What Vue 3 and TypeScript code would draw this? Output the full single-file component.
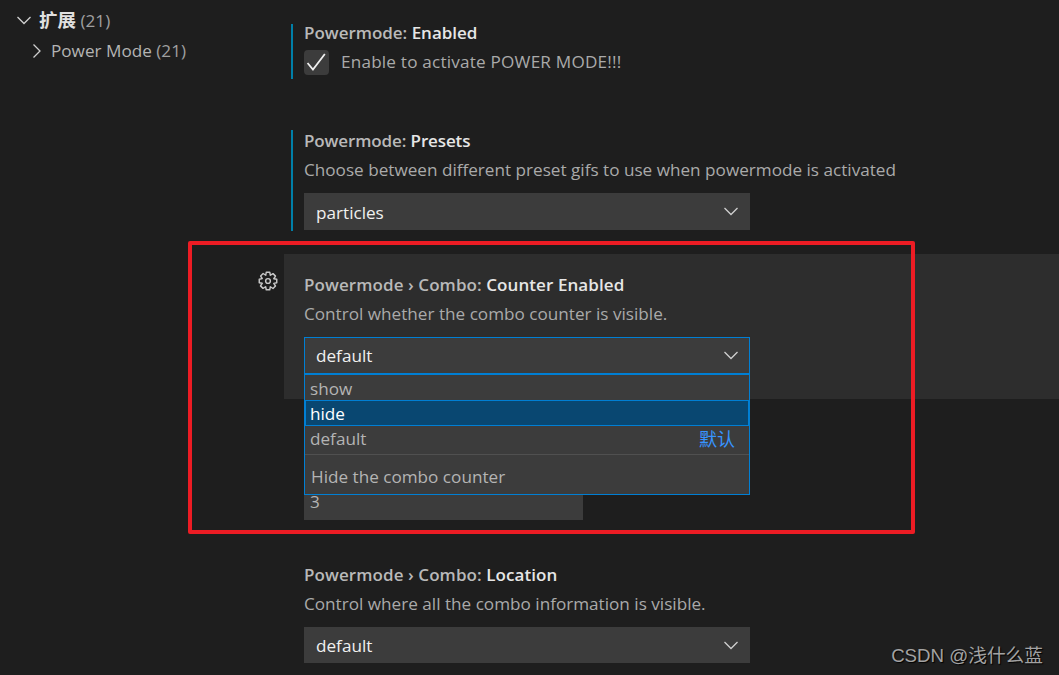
<script setup lang="ts">
const options = ['show', 'hide', 'default']
</script>

<template>
  <div class="page">
    <aside class="tree">
      <div class="tree-row top">
        <svg class="chev" viewBox="0 0 16 16"><path d="M1.5 5 8 11.5 14.5 5" /></svg>
        <span><b>扩展</b> <span class="count">(21)</span></span>
      </div>
      <div class="tree-row sub">
        <svg class="chev" viewBox="0 0 16 16"><path d="M4.5 1.5 11 8l-6.5 6.5" /></svg>
        <span>Power Mode <span class="count">(21)</span></span>
      </div>
    </aside>

    <main class="list">
      <section class="setting first marked">
        <div class="title">Powermode: <b>Enabled</b></div>
        <label class="check-line">
          <span class="checkbox">
            <svg viewBox="0 0 24 24"><path d="M3.4 12.5 8.6 18.8 20 3.8" /></svg>
          </span>
          <span class="desc wide">Enable to activate POWER MODE!!!</span>
        </label>
      </section>

      <section class="setting second marked">
        <div class="title narrow">Powermode: <b>Presets</b></div>
        <div class="desc line">Choose between different preset gifs to use when powermode is activated</div>
        <div class="select">
          <span>particles</span>
          <svg class="select-chev" viewBox="0 0 16 16"><path d="M1.5 5 8 11.5 14.5 5" /></svg>
        </div>
      </section>

      <section class="setting third">
        <svg class="gear" viewBox="0 0 16 16">
          <path d="M9.4 1l.5 2.4L12 2.1l2 2-1.4 2.1 2.4.4v2.8l-2.4.5L14 12l-2 2-2.1-1.4-.5 2.4H6.6l-.5-2.4L4 13.9l-2-2 1.4-2.1L1 9.4V6.6l2.4-.5L2.1 4l2-2 2.1 1.4.4-2.4h2.8z" />
          <circle cx="8" cy="8" r="1.9" />
        </svg>
        <div class="title combo">Powermode › Combo: <b>Counter Enabled</b></div>
        <div class="desc line">Control whether the combo counter is visible.</div>
        <div class="select-wrap">
          <div class="select focused">
            <span>default</span>
            <svg class="select-chev" viewBox="0 0 16 16"><path d="M1.5 5 8 11.5 14.5 5" /></svg>
          </div>
          <div class="menu">
            <div
              v-for="o in options"
              :key="o"
              class="option"
              :class="{ active: o === 'hide', last: o === 'default', head: o === 'show' }"
            >
              <span>{{ o }}</span>
              <span v-if="o === 'default'" class="tag">默认</span>
            </div>
            <div class="menu-desc">Hide the combo counter</div>
          </div>
        </div>
      </section>

      <section class="setting fourth">
        <div class="number">3</div>
      </section>

      <section class="setting fifth">
        <div class="title combo">Powermode › Combo: <b>Location</b></div>
        <div class="desc line">Control where all the combo information is visible.</div>
        <div class="select">
          <span>default</span>
          <svg class="select-chev" viewBox="0 0 16 16"><path d="M1.5 5 8 11.5 14.5 5" /></svg>
        </div>
      </section>
    </main>

    <div class="red-frame"></div>
    <div class="watermark">CSDN @浅什么蓝</div>
  </div>
</template>

<style scoped>
.page {
  position: relative;
  display: flex;
  width: 1059px;
  height: 675px;
  overflow: hidden;
  background: #1e1e1e;
  color: #cccccc;
  font-family: "Open Sans", "Noto Sans CJK SC", sans-serif;
  font-size: 17.15px;
}
.tree {
  width: 284px;
  flex: none;
  padding-top: 4px;
  box-sizing: border-box;
}
.tree-row {
  display: flex;
  align-items: center;
  height: 31px;
  color: #b4b4b4;
  white-space: nowrap;
}
.tree-row.top {
  height: 29px;
  margin-bottom: 2px;
  padding-left: 16px;
  gap: 7px;
}
.tree-row.top .chev {
  margin-top: 3px;
}
.tree-row.top b {
  color: #e0e0e0;
  font-size: 18.5px;
  font-weight: 700;
}
.tree-row.sub {
  padding-left: 29px;
  gap: 6px;
}
.count {
  color: #a0a0a0;
}
.chev {
  width: 16px;
  height: 16px;
  flex: none;
}
.chev path,
.select-chev path {
  fill: none;
  stroke: #cfcfcf;
  stroke-width: 1.3;
}
.list {
  flex: 1;
  min-width: 0;
  padding-top: 24px;
}
.setting {
  position: relative;
  box-sizing: border-box;
  padding-left: 20px;
}
.marked::before {
  content: "";
  position: absolute;
  left: 7px;
  top: 0;
  bottom: 0;
  width: 2px;
  background: #007fa8;
}
.first {
  height: 55px;
}
.second {
  height: 101px;
  margin-top: 51px;
}
.third {
  height: 145px;
  margin-top: 23px;
  padding-top: 21px;
  background: #2d2d2d;
}
.fourth {
  height: 121px;
}
.fifth {
  margin-top: 45px;
}
.first .title {
  line-height: 18px;
}
.second .title {
  padding-top: 1px;
}
.title {
  height: 20px;
  line-height: 20px;
  color: #b9b9b9;
  font-size: 17px;
  font-weight: 600;
  letter-spacing: -0.02px;
  white-space: nowrap;
}
.title.narrow {
  letter-spacing: -0.12px;
}
.title.combo {
  letter-spacing: 0.08px;
}
.title b {
  color: #e6e6e6;
  font-weight: 600;
}
.desc {
  color: #aaaaaa;
  white-space: nowrap;
}
.desc.wide {
  padding-bottom: 2px;
  letter-spacing: 0.2px;
}
.line {
  height: 22px;
  line-height: 22px;
  margin-top: 8px;
  margin-bottom: 12px;
}
.check-line {
  display: flex;
  align-items: center;
  gap: 12px;
  margin-top: 6px;
}
.checkbox {
  display: flex;
  width: 25px;
  height: 25px;
  border-radius: 4px;
  background: #3c3c3c;
}
.checkbox svg path {
  fill: none;
  stroke: #f0f0f0;
  stroke-width: 1.7;
}
.select {
  display: flex;
  align-items: center;
  justify-content: space-between;
  box-sizing: border-box;
  width: 446px;
  height: 37px;
  padding: 2px 11px 0 12px;
  background: #3c3c3c;
  color: #f0f0f0;
  line-height: 35px;
}
.select-chev {
  width: 16px;
  height: 16px;
  flex: none;
  position: relative;
  top: -2px;
}
.select.focused {
  border: 1px solid #007fd4;
  padding: 0 10px 0 11px;
}
.select.focused .select-chev {
  top: -1px;
}
.select-wrap {
  position: relative;
  width: 446px;
}
.fifth .select {
  height: 36px;
  margin-top: 1px;
  padding-top: 0;
}
.fifth .select-chev {
  top: 0;
}
.menu {
  position: absolute;
  z-index: 2;
  left: 0;
  top: 36px;
  box-sizing: border-box;
  width: 446px;
  height: 122px;
  border: 1px solid #007fd4;
  border-top-width: 2px;
  background: #3c3c3c;
}
.option {
  display: flex;
  justify-content: space-between;
  box-sizing: border-box;
  height: 26px;
  padding: 0 14px 0 5px;
  line-height: 26px;
  color: #b4b4b4;
}
.option.head {
  height: 25px;
  line-height: 28px;
}
.option.active {
  height: 26px;
  border: 1px solid #007fd4;
  padding-left: 4px;
  background: #094771;
  color: #ffffff;
  line-height: 26px;
}
.option.last {
  height: 29px;
  border-bottom: 1px solid #505050;
}
.tag {
  color: #3794ff;
  font-size: 18px;
}
.menu-desc {
  padding: 10px 0 0 6px;
  line-height: 24px;
  color: #b4b4b4;
}
.number {
  position: absolute;
  left: 20px;
  top: 89px;
  width: 279px;
  height: 32px;
  padding: 0 6px;
  box-sizing: border-box;
  background: #3c3c3c;
  color: #b4b4b4;
  line-height: 28px;
}
.gear {
  position: absolute;
  left: -26px;
  top: 17px;
  width: 20px;
  height: 20px;
}
.gear path,
.gear circle {
  fill: none;
  stroke: #c8c8c8;
  stroke-width: 1.15;
  stroke-linejoin: round;
}
.red-frame {
  position: absolute;
  left: 188px;
  top: 241px;
  width: 727px;
  height: 293px;
  box-sizing: border-box;
  border: 4px solid #ed1c24;
  border-radius: 2px;
  pointer-events: none;
  z-index: 3;
}
.watermark {
  position: absolute;
  right: 16px;
  bottom: 7px;
  color: #a3a3a3;
  font-family: "Liberation Sans", "Noto Sans CJK SC", sans-serif;
  font-size: 18.7px;
  line-height: 24px;
  text-shadow: 1px 1px 1px #000;
}
</style>
